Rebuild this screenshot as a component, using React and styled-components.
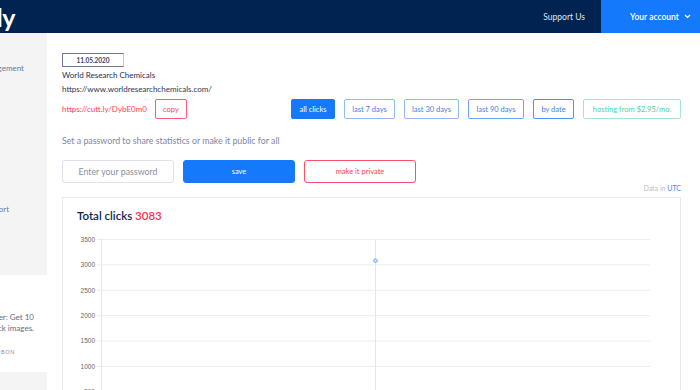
import React from 'react'
import styled, { createGlobalStyle } from 'styled-components'

const GlobalStyle = createGlobalStyle`
  body {
    margin: 0;
    font-family: Lato, "Open Sans", sans-serif;
    background: #fff;
  }
  * { box-sizing: border-box; }
`

const Page = styled.div`
  width: 700px;
  height: 390px;
  overflow: hidden;
  display: flex;
  flex-direction: column;
`

const Header = styled.header`
  height: 33px;
  flex-shrink: 0;
  background: #012351;
  display: flex;
  align-items: stretch;
`

const Logo = styled.div`
  width: 47px;
  overflow: hidden;
  display: flex;
  justify-content: flex-end;
  align-items: center;
  padding-right: 32px;
  color: #fff;
  font-size: 25px;
  font-weight: 700;
  white-space: nowrap;
  letter-spacing: -0.5px;
`

const Support = styled.a`
  margin-left: auto;
  margin-right: 16px;
  align-self: center;
  color: #dfe6f2;
  font-size: 8.5px;
`

const Account = styled.div`
  width: 99px;
  background: #1479fb;
  color: #fff;
  font-size: 8.5px;
  font-weight: 600;
  display: flex;
  align-items: center;
  padding-left: 29px;
  gap: 5px;
`

const Body = styled.div`
  flex: 1;
  display: flex;
  min-height: 0;
`

const Sidebar = styled.aside`
  width: 47px;
  flex-shrink: 0;
  background: #f4f4f4;
  overflow: hidden;
  display: flex;
  flex-direction: column;
  & > * { flex-shrink: 0; }
`

const NavItem = styled.div`
  display: flex;
  justify-content: flex-end;
  white-space: nowrap;
  font-size: 8px;
  line-height: 11px;
  color: #6b7896;
  padding-right: ${p => p.$right}px;
  margin-top: ${p => p.$top}px;
`

const Ad = styled.div`
  margin-top: 60px;
  background: #fff;
  height: 97px;
  padding-top: 37px;
  display: flex;
  flex-direction: column;
`

const AdLine = styled.div`
  display: flex;
  justify-content: flex-end;
  white-space: nowrap;
  padding-right: 13px;
  font-size: 8px;
  line-height: 11px;
  color: #5d6b8a;
`

const AdVia = styled(AdLine)`
  margin-top: 13px;
  padding-right: 32px;
  font-size: 5.5px;
  letter-spacing: 0.6px;
  color: #a08a9a;
`

const Main = styled.main`
  flex: 1;
  min-width: 0;
  padding: 20px 19px 0 15px;
  display: flex;
  flex-direction: column;
  & > * { flex-shrink: 0; }
`

const DateBox = styled.div`
  width: 62px;
  height: 14px;
  border: 1px solid #6d7591;
  border-right-color: #c4c9d6;
  font-size: 6.5px;
  font-weight: 700;
  color: #3b3f63;
  display: flex;
  align-items: center;
  justify-content: center;
`

const Title = styled.div`
  margin-top: 3px;
  font-size: 8px;
  line-height: 11px;
  color: #1d2d58;
`

const Url = styled(Title)`
  margin-top: 3px;
  color: #2b3659;
`

const LinkRow = styled.div`
  margin-top: 4px;
  height: 20px;
  display: flex;
  align-items: center;
`

const Short = styled.span`
  font-size: 8px;
  color: #ff3e5b;
  margin-right: 8px;
`

const Filters = styled.div`
  margin-left: auto;
  display: flex;
  gap: 9px;
  height: 20px;
`

const Btn = styled.button`
  font-family: inherit;
  height: 20px;
  width: ${p => p.$w}px;
  padding: 0;
  font-size: 7.5px;
  border-radius: 2px;
  cursor: pointer;
  background: ${p => (p.$filled ? '#1479fb' : '#fff')};
  color: ${p => (p.$filled ? '#fff' : p.$color)};
  border: 1px solid ${p => (p.$filled ? '#1479fb' : p.$border)};
`

const Hint = styled.p`
  margin: 16px 0 0;
  font-size: 8.8px;
  line-height: 12px;
  color: #7e86a2;
`

const FormRow = styled.div`
  margin-top: 13px;
  display: flex;
  gap: 9px;
`

const PassInput = styled.input`
  width: 112px;
  height: 23px;
  border: 1px solid #dde1e8;
  border-radius: 3px;
  font-family: inherit;
  font-size: 8.8px;
  text-align: center;
  &::placeholder { color: #8a8f9f; }
`

const FormBtn = styled(Btn)`
  width: 112px;
  height: 23px;
  border-radius: 3px;
  font-size: 7.5px;
`

const Utc = styled.div`
  margin-top: 0;
  text-align: right;
  font-size: 7px;
  line-height: 10px;
  color: #b7bed0;
  span { color: #4a86ee; }
`

const Card = styled.section`
  margin-top: 4px;
  flex: 1 1 auto;
  flex-shrink: 1;
  min-height: 0;
  overflow: hidden;
  border: 1px solid #e6e9ee;
  border-bottom: none;
  padding-top: 10px;
`

const CardTitle = styled.h2`
  margin: 0 0 0 14px;
  font-size: 11.5px;
  line-height: 16px;
  font-weight: 600;
  color: #10254e;
  span { color: #ff2e4f; }
`

const Chart = styled.svg`
  display: block;
  margin-top: 7px;
`

const ticks = [3500, 3000, 2500, 2000, 1500, 1000, 500]

function ClicksChart() {
  const top = 8.5
  const step = 25.4
  return (
    <Chart width="617" height="170">
      {ticks.map((t, i) => {
        const y = top + i * step
        return (
          <g key={t}>
            <line x1="34" x2="587" y1={y} y2={y} stroke="#ececec" strokeWidth="1" />
            <text x="32" y={y + 2.2} fontSize="6.5" fill="#666" textAnchor="end" fontFamily="Liberation Sans, Arial, sans-serif">{t}</text>
          </g>
        )
      })}
      <line x1="38.5" x2="38.5" y1={top} y2="170" stroke="#e6e6e6" />
      <line x1="312.5" x2="312.5" y1={top} y2="170" stroke="#e6e6e6" />
      <circle cx="312.5" cy={top + (3500 - 3083) / 500 * step} r="1.8" fill="#cfe0fb" stroke="#5a9cf8" strokeWidth="0.8" />
    </Chart>
  )
}

const Chevron = () => (
  <svg width="7" height="5" viewBox="0 0 7 5">
    <path d="M1 1l2.5 2.5L6 1" fill="none" stroke="#fff" strokeWidth="1.2" />
  </svg>
)

export default function App() {
  return (
    <Page>
      <GlobalStyle />
      <Header>
        <Logo>Cuttly</Logo>
        <Support>Support Us</Support>
        <Account>Your account <Chevron /></Account>
      </Header>
      <Body>
        <Sidebar>
          <NavItem $top={30} $right={23}>Link Management</NavItem>
          <NavItem $top={130} $right={38}>Data Export</NavItem>
          <Ad>
            <AdLine>Limited time offer: Get 10</AdLine>
            <AdLine>free Adobe Stock images.</AdLine>
            <AdVia>ADS VIA CARBON</AdVia>
          </Ad>
        </Sidebar>
        <Main>
          <DateBox>11.05.2020</DateBox>
          <Title>World Research Chemicals</Title>
          <Url>https://www.worldresearchchemicals.com/</Url>
          <LinkRow>
            <Short>https://cutt.ly/DybE0m0</Short>
            <Btn $w={32} $color="#ff3e5b" $border="#ff5a70">copy</Btn>
            <Filters>
              <Btn $w={44} $filled>all clicks</Btn>
              <Btn $w={51} $color="#3d7fe6" $border="#8fbaf7">last 7 days</Btn>
              <Btn $w={55} $color="#3d7fe6" $border="#8fbaf7">last 30 days</Btn>
              <Btn $w={56} $color="#3d7fe6" $border="#6aa3f5">last 90 days</Btn>
              <Btn $w={41} $color="#3d7fe6" $border="#4f92f4">by date</Btn>
              <Btn $w={98} $color="#4fcf9c" $border="#a5e6cb">hosting from $2.95/mo.</Btn>
            </Filters>
          </LinkRow>
          <Hint>Set a password to share statistics or make it public for all</Hint>
          <FormRow>
            <PassInput placeholder="Enter your password" />
            <FormBtn $filled>save</FormBtn>
            <FormBtn $color="#ff3e5b" $border="#ff4d67">make it private</FormBtn>
          </FormRow>
          <Utc>Data in <span>UTC</span></Utc>
          <Card>
            <CardTitle>Total clicks <span>3083</span></CardTitle>
            <ClicksChart />
          </Card>
        </Main>
      </Body>
    </Page>
  )
}
